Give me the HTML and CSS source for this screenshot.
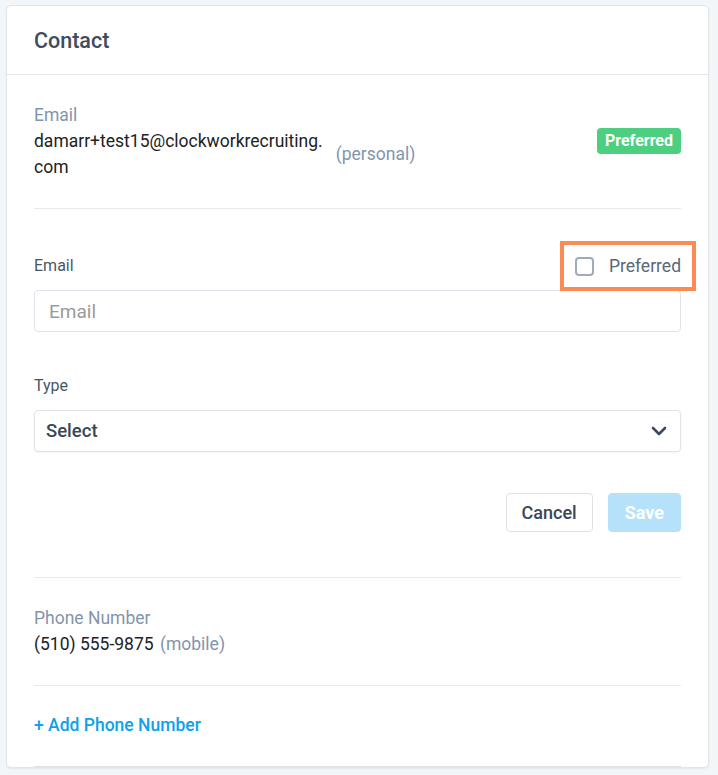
FILE: index.html
```html
<!DOCTYPE html>
<html>
<head>
<meta charset="utf-8">
<link rel="stylesheet" href="styles.css">
</head>
<body>
<div class="card">
  <div class="card-header">Contact</div>

  <div class="section">
    <div class="info-label">Email</div>
    <div class="info-row">
      <div class="email-value">damarr+test15@clockworkrecruiting.<wbr>com</div>
      <div class="info-type">(personal)</div>
      <span class="badge">Preferred</span>
    </div>
  </div>

  <div class="section form">
    <div class="label-row">
      <label class="field-label">Email</label>
      <label class="check">
        <span class="box"></span>
        <span class="check-text">Preferred</span>
      </label>
    </div>
    <div class="input placeholder">Email</div>

    <label class="field-label type-label">Type</label>
    <div class="input select">
      <span>Select</span>
      <svg class="chev" width="16" height="10" viewBox="0 0 16 10"><path d="M2 2l6 6 6-6" fill="none" stroke="#3d4a5c" stroke-width="2.6" stroke-linecap="round" stroke-linejoin="round"/></svg>
    </div>

    <div class="actions">
      <button class="btn cancel">Cancel</button>
      <button class="btn save">Save</button>
    </div>
  </div>

  <div class="section">
    <div class="info-label">Phone Number</div>
    <div class="phone-row">(510) 555-9875 <span class="info-type">(mobile)</span></div>
  </div>

  <div class="section add">
    <a class="add-link">+ Add Phone Number</a>
  </div>
</div>
</body>
</html>
```

FILE: styles.css
```css
* { box-sizing: border-box; }
html, body { margin: 0; }
body {
  background: #f3f6f9;
  font-family: Roboto, "Liberation Sans", sans-serif;
  padding: 5px 10px 0 6px;
  height: 775px;
  overflow: hidden;
}
.card {
  width: 703px;
  background: #fff;
  border: 1px solid #e1e5ea;
  border-radius: 5px;
  box-shadow: 0 1px 2px rgba(0,0,0,0.06);
}
.card-header {
  height: 69px;
  padding: 0 27px;
  display: flex;
  align-items: center;
  font-size: 21.5px;
  font-weight: 500;
  color: #3e4c5e;
  border-bottom: 1px solid #e2e6eb;
}
.section {
  margin: 0 27px 0 27px;
  border-bottom: 1px solid #e6e9ee;
  padding: 27px 0 28px;
}
.info-label {
  font-size: 17.5px;
  line-height: 26px;
  color: #8395ab;
}
.info-row {
  display: flex;
  align-items: center;
}
.email-value {
  width: min-content;
  font-size: 17.5px;
  line-height: 26px;
  color: #222;
}
.info-type {
  font-size: 17.5px;
  line-height: 26px;
  color: #8395ab;
  margin-left: 13px;
}
.badge {
  margin-left: auto;
  align-self: flex-start;
  background: #4ccf80;
  color: #fff;
  font-weight: 700;
  font-size: 16px;
  line-height: 26px;
  padding: 0 8px;
  border-radius: 4px;
}
.form { padding: 47px 0 45px; }
.label-row {
  display: flex;
  justify-content: space-between;
  align-items: center;
  height: 20px;
  margin-bottom: 14px;
}
.field-label {
  display: block;
  font-size: 16px;
  line-height: 20px;
  color: #4a5666;
}
.check {
  display: flex;
  align-items: center;
  gap: 15px;
  height: 20px;
  outline: 4px solid #fb8a53;
  outline-offset: 11px;
}
.box {
  width: 19px;
  height: 19px;
  border: 2px solid #9eabba;
  border-radius: 4px;
}
.check-text {
  font-size: 17.5px;
  color: #5a6778;
}
.input {
  height: 42px;
  border: 1px solid #dfe2e8;
  border-radius: 4px;
  padding: 0 14px;
  display: flex;
  align-items: center;
  font-size: 19px;
}
.placeholder { color: #9a9a9a; }
.type-label { margin: 44px 0 14px; }
.select {
  justify-content: space-between;
  color: #3b4656;
  font-weight: 500;
  font-size: 18.5px;
  padding: 0 13px 0 11px;
  box-shadow: 0 1px 2px rgba(0,0,0,0.05);
}
.actions {
  display: flex;
  justify-content: flex-end;
  gap: 15px;
  margin-top: 41px;
}
.btn {
  height: 39px;
  border-radius: 4px;
  font-family: inherit;
  font-size: 18px;
  font-weight: 500;
  padding: 0 16px;
}
.cancel {
  background: #fff;
  border: 1px solid #dde1e6;
  color: #3b4656;
  padding: 0 15px;
}
.save {
  background: #b5e1fa;
  border: 1px solid #b5e1fa;
  color: #fff;
  font-weight: 700;
}
.phone-row {
  font-size: 17.5px;
  line-height: 26px;
  color: #222;
}
.phone-row .info-type { margin-left: 2px; }
.add { padding: 26px 0 28px; border-bottom-color: #dde1e6; }
.add-link {
  display: block;
  font-size: 17.5px;
  line-height: 26px;
  font-weight: 500;
  color: #0ea1ec;
}
```
